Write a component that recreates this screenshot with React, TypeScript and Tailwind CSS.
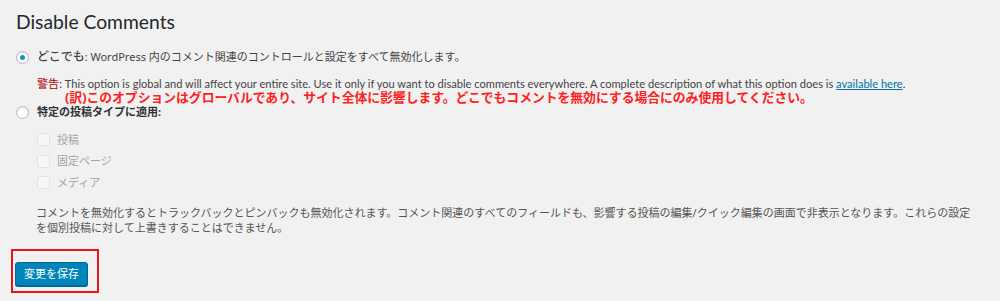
const jp = "font-['Noto_Sans','Noto_Sans_CJK_JP',sans-serif]";
const latin = "font-['Lato','Noto_Sans_CJK_JP',sans-serif]";

function Radio({ checked }: { checked?: boolean }) {
  return (
    <span className="flex h-[13px] w-[13px] shrink-0 items-center justify-center rounded-full border border-[#b4b9be] bg-white shadow-[inset_0_1px_2px_rgba(0,0,0,0.1)]">
      {checked && <span className="h-[5px] w-[5px] rounded-full bg-[#1e8cbe]" />}
    </span>
  );
}

function DisabledBox({ label }: { label: string }) {
  return (
    <div className="flex h-[21.5px] items-center gap-[7px]">
      <span className="h-[13px] w-[13px] rounded-[2px] border border-[#e2e4e7] bg-[#f6f6f6]" />
      <span className="text-[11px] leading-[14px] text-[#a0a5aa]">{label}</span>
    </div>
  );
}

export default function App() {
  return (
    <div className={`h-[301px] w-[1000px] overflow-hidden bg-[#f1f1f1] px-[15px] text-[#444] ${jp}`}>
      <h1 className={`mt-[7px] ml-[1px] text-[19.3px] leading-[30px] text-[#23282d] ${latin}`}>Disable Comments</h1>

      <div className="mt-[12px] flex h-[16px] items-center gap-[8px] pl-[1px]">
        <Radio checked />
        <p className="text-[11px] leading-[16px]">
          <span className="text-[12px] font-medium">どこでも</span>: WordPress 内のコメント関連のコントロールと設定をすべて無効化します。
        </p>
      </div>

      <div className="mt-[12px] pl-[22px]">
        <p className={`text-[11.1px] leading-[14px] ${latin}`}>
          <span className="text-[#a00]">警告</span>: This option is global and will affect your entire site. Use it only if you want to disable comments everywhere. A complete description of what this option does is{" "}
          <span className="text-[#0073aa] underline">available here</span>.
        </p>
        <p className="pl-[28px] text-[12.8px] font-bold leading-[13px] text-[#ff2020]">
          (訳)このオプションはグローバルであり、サイト全体に影響します。どこでもコメントを無効にする場合にのみ使用してください。
        </p>
      </div>

      <div className="mt-[1px] flex h-[14px] items-center gap-[8px] pl-[1px]">
        <Radio />
        <p className="text-[11px] font-bold leading-[14px] text-[#333]">特定の投稿タイプに適用:</p>
      </div>

      <div className="mt-[10px] pl-[22px]">
        <DisabledBox label="投稿" />
        <DisabledBox label="固定ページ" />
        <DisabledBox label="メディア" />
      </div>

      <p className="mt-[11px] w-[960px] pl-[21px] text-[11px] leading-[15px] text-[#555]">
        コメントを無効化するとトラックバックとピンバックも無効化されます。コメント関連のすべてのフィールドも、影響する投稿の編集/クイック編集の画面で非表示となります。これらの設定を個別投稿に対して上書きすることはできません。
      </p>

      <div className="mt-[14px] ml-[-4px] w-[88px] border-2 border-[#e8141c] px-[2px] pt-[9px] pb-[5px]">
        <button className="h-[24px] w-[73px] rounded-[3px] border border-[#006799] bg-[#0085ba] text-[11px] text-white shadow-[0_1px_0_#006799]">
          変更を保存
        </button>
      </div>
    </div>
  );
}
